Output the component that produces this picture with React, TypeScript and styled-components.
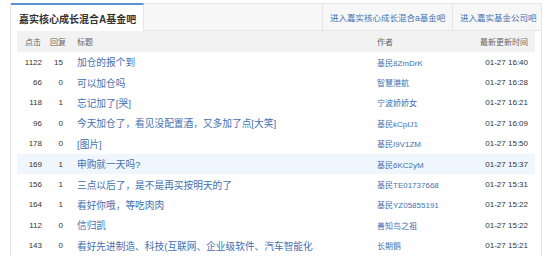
import React from "react";
import styled, { createGlobalStyle } from "styled-components";

const Global = createGlobalStyle`
  html, body { margin: 0; padding: 0; background: #fff; }
  body { font-family: "Liberation Sans", "Noto Sans CJK SC", sans-serif; }
`;

const Frame = styled.div`
  margin: 3px 0 0 10px;
  width: 532px;
  box-sizing: border-box;
  border-left: 1px solid #e5e5e5;
  border-right: 1px solid #e5e5e5;
  min-height: 260px;
`;

const TabBar = styled.div`
  display: flex;
  height: 28px;
  box-sizing: border-box;
  background: #f7f7f7;
  border-bottom: 1px solid #e5e5e5;
`;

const TitleTab = styled.div`
  box-sizing: border-box;
  width: 133px;
  height: 28px;
  margin-bottom: -1px;
  background: #fff;
  border-top: 2px solid #5b8fd6;
  border-right: 1px solid #e5e5e5;
  padding-left: 8px;
  display: flex;
  align-items: center;
  font-size: 10px;
  font-weight: bold;
  color: #333;
  white-space: nowrap;
`;

const Spacer = styled.div`
  flex: 1;
  border-top: 1px solid #e5e5e5;
`;

const LinkTab = styled.a<{ $w: number }>`
  box-sizing: border-box;
  width: ${(p) => p.$w}px;
  border-top: 1px solid #e5e5e5;
  border-left: 1px solid #e5e5e5;
  display: flex;
  align-items: center;
  padding-left: 7px;
  font-size: 8.5px;
  color: #4470b0;
  text-decoration: none;
  white-space: nowrap;
`;

const Table = styled.div`
  padding: 0 6px 0 6px;
`;

const Row = styled.div<{ $head?: boolean; $hl?: boolean }>`
  display: grid;
  grid-template-columns: 25px 21px 314px 1fr 58px;
  padding-right: 7px;
  height: ${(p) => (p.$head ? "21px" : "20.4px")};
  align-items: center;
  background: ${(p) => (p.$head ? "#f2f2f2" : p.$hl ? "#eff6fd" : "transparent")};
  color: ${(p) => (p.$head ? "#666" : "#333")};
  font-size: 8px;
  white-space: nowrap;
`;

const HeadCell = styled.div<{ $right?: boolean; $pad?: number }>`
  text-align: ${(p) => (p.$right ? "right" : "left")};
  padding-left: ${(p) => p.$pad ?? 0}px;
`;

const Num = styled.div`
  text-align: right;
`;

const TitleCell = styled.a`
  padding-left: 14px;
  font-size: 9.7px;
  color: #4470b0;
  text-decoration: none;
  overflow: hidden;
`;

const Author = styled.a`
  color: #4470b0;
  text-decoration: none;
`;

const Time = styled.div`
  text-align: right;
`;

const rows = [
  ["1122", "15", "加仓的报个到", "基民8ZmDrK", "01-27 16:40"],
  ["66", "0", "可以加仓吗", "智慧港航", "01-27 16:28"],
  ["118", "1", "忘记加了[哭]", "宁波娇娇女", "01-27 16:21"],
  ["96", "0", "今天加仓了，看见没配置酒，又多加了点[大笑]", "基民kCpIJ1", "01-27 16:09"],
  ["178", "0", "[图片]", "基民I9V1ZM", "01-27 15:50"],
  ["169", "1", "申购就一天吗?", "基民6KC2yM", "01-27 15:37"],
  ["156", "1", "三点以后了，是不是再买按明天的了", "基民TE01737668", "01-27 15:31"],
  ["164", "1", "看好你哦，等吃肉肉", "基民YZ05855191", "01-27 15:22"],
  ["112", "0", "信归凯", "善知鸟之祖", "01-27 15:22"],
  ["143", "0", "看好先进制造、科技(互联网、企业级软件、汽车智能化", "长期鹅", "01-27 15:21"],
];

export default function App() {
  return (
    <>
      <Global />
      <Frame>
        <TabBar>
          <TitleTab>嘉实核心成长混合A基金吧</TitleTab>
          <Spacer />
          <LinkTab $w={130}>进入嘉实核心成长混合a基金吧</LinkTab>
          <LinkTab $w={89}>进入嘉实基金公司吧</LinkTab>
        </TabBar>
        <Table>
          <Row $head>
            <HeadCell $pad={8}>点击</HeadCell>
            <HeadCell $pad={8}>回复</HeadCell>
            <HeadCell $pad={14}>标题</HeadCell>
            <HeadCell>作者</HeadCell>
            <HeadCell $right>最新更新时间</HeadCell>
          </Row>
          {rows.map((r, i) => (
            <Row key={i} $hl={i === 5}>
              <Num>{r[0]}</Num>
              <Num>{r[1]}</Num>
              <TitleCell>{r[2]}</TitleCell>
              <Author>{r[3]}</Author>
              <Time>{r[4]}</Time>
            </Row>
          ))}
        </Table>
      </Frame>
    </>
  );
}
